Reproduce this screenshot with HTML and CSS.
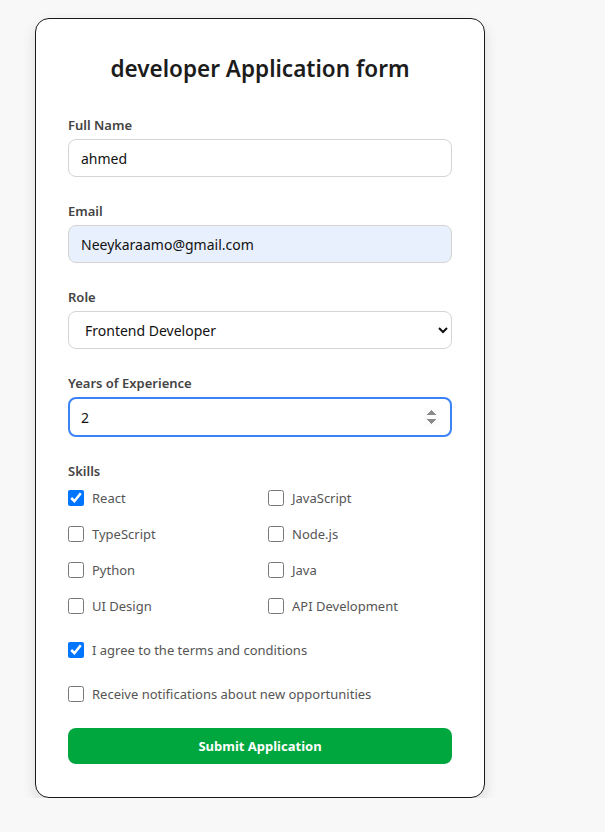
FILE: index.html
```html
<!DOCTYPE html>
<html lang="en">
<head>
<meta charset="utf-8">
<title>developer Application form</title>
<link rel="stylesheet" href="styles.css">
</head>
<body>
<div class="page">
  <form class="card">
    <h1 class="title">developer Application form</h1>

    <div class="group">
      <label class="label" for="name">Full Name</label>
      <input class="field" id="name" type="text" value="ahmed">
    </div>

    <div class="group">
      <label class="label" for="email">Email</label>
      <input class="field field-autofill" id="email" type="email" value="Neeykaraamo@gmail.com">
    </div>

    <div class="group">
      <label class="label" for="role">Role</label>
      <select class="field select" id="role">
        <option>Frontend Developer</option>
        <option>Backend Developer</option>
        <option>Full Stack Developer</option>
      </select>
    </div>

    <div class="group">
      <label class="label" for="years">Years of Experience</label>
      <input class="field field-focus" id="years" type="number" value="2" autofocus>
    </div>

    <div class="group group-skills">
      <span class="label label-skills">Skills</span>
      <div class="skills">
        <label class="check"><input type="checkbox" checked><span>React</span></label>
        <label class="check"><input type="checkbox"><span>JavaScript</span></label>
        <label class="check"><input type="checkbox"><span>TypeScript</span></label>
        <label class="check"><input type="checkbox"><span>Node.js</span></label>
        <label class="check"><input type="checkbox"><span>Python</span></label>
        <label class="check"><input type="checkbox"><span>Java</span></label>
        <label class="check"><input type="checkbox"><span>UI Design</span></label>
        <label class="check"><input type="checkbox"><span>API Development</span></label>
      </div>
    </div>

    <label class="check check-single"><input type="checkbox" checked><span>I agree to the terms and conditions</span></label>
    <label class="check check-single"><input type="checkbox"><span>Receive notifications about new opportunities</span></label>

    <button class="submit" type="button">Submit Application</button>
  </form>
</div>
</body>
</html>
```

FILE: styles.css
```css
* { box-sizing: border-box; }

html, body {
  margin: 0;
  padding: 0;
  background: #f8f8f8;
  font-family: "Noto Sans", "Open Sans", sans-serif;
}

.page {
  padding: 18px 0 0 35px;
}

.card {
  width: 450px;
  background: #ffffff;
  border: 1px solid #1a1a1a;
  border-radius: 14px;
  padding: 32px 32px 33px 32px;
  box-shadow: 0 6px 14px rgba(0, 0, 0, 0.12);
  display: flex;
  flex-direction: column;
}

.title {
  margin: 0 0 29px;
  text-align: center;
  font-size: 22.5px;
  font-weight: 600;
  color: #1c1c1c;
  line-height: 36px;
}

.group {
  display: flex;
  flex-direction: column;
  margin-bottom: 25px;
}

.label {
  font-size: 13px;
  font-weight: 600;
  color: #444;
  line-height: 18px;
  margin-bottom: 5px;
}

.label-skills {
  margin-bottom: 8px;
}

.field {
  height: 38px;
  width: 100%;
  border: 1px solid #d4d4d4;
  border-radius: 8px;
  padding: 0 12px;
  font-family: inherit;
  font-size: 14px;
  color: #111;
  background: #fff;
  outline: none;
}

.field-autofill {
  background: #e8f0fe;
}

.select {
  height: 38px;
  padding: 0 8px 0 12px;
  appearance: auto;
}

.field-focus {
  height: 40px;
  border: 2px solid #3b82f6;
  padding: 0 11px;
}

.group-skills {
  margin-bottom: 24px;
}

.skills {
  display: grid;
  grid-template-columns: 1fr 1fr;
  column-gap: 16px;
  row-gap: 16px;
}

.check {
  display: flex;
  align-items: center;
  gap: 8px;
  font-size: 13px;
  color: #555;
  line-height: 20px;
}

.check input {
  width: 16px;
  height: 16px;
  margin: 0;
}

.check-single {
  margin-bottom: 24px;
}

.submit {
  margin-top: 0;
  height: 36px;
  border: none;
  border-radius: 8px;
  background: #00a63e;
  color: #fff;
  font-family: inherit;
  font-size: 13px;
  font-weight: 700;
  cursor: pointer;
}
```
